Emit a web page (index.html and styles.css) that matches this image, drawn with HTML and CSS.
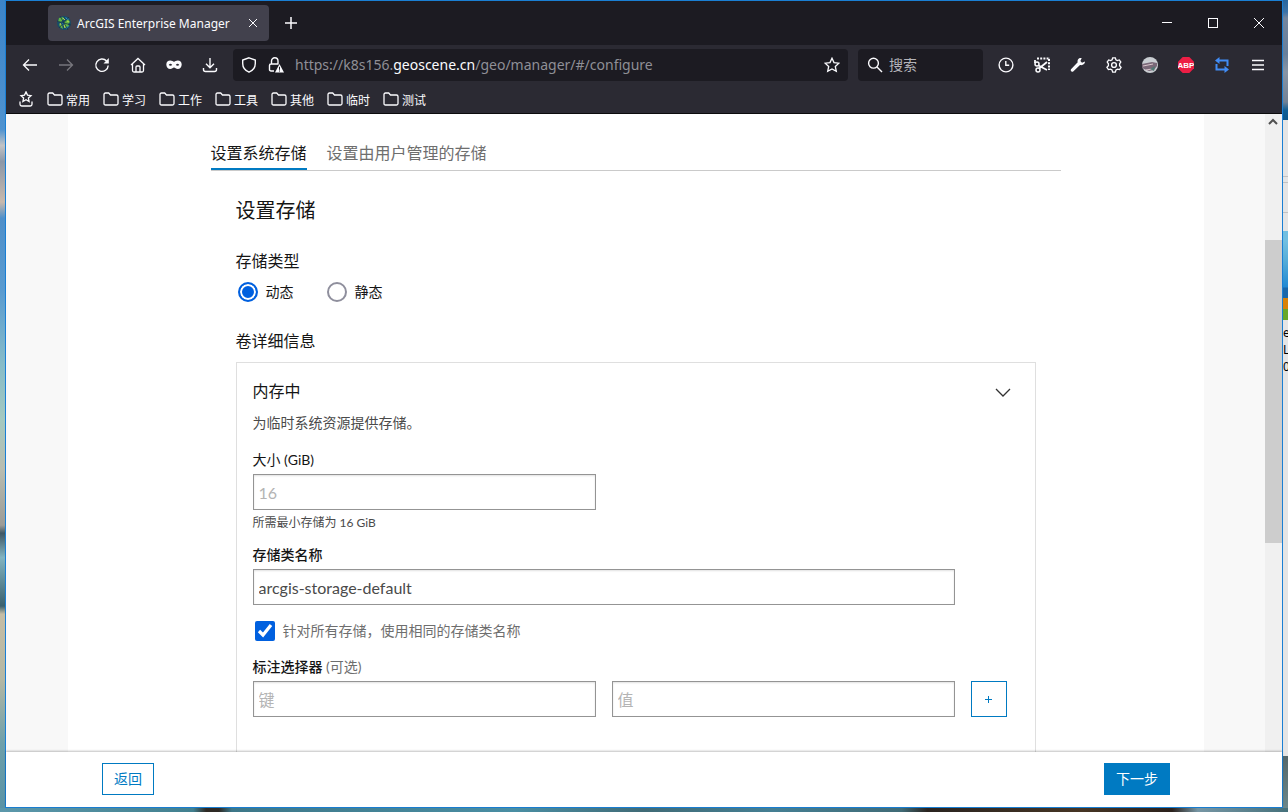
FILE: index.html
```html
<!DOCTYPE html>
<html lang="zh-CN">
<head>
<meta charset="utf-8">
<title>ArcGIS Enterprise Manager</title>
<link rel="stylesheet" href="styles.css">
</head>
<body>
<div class="desktop">
  <div class="edge-left"></div>
  <div class="window">
    <header class="titlebar">
      <div class="browser-tab">
        <svg class="favicon" viewBox="0 0 16 16" aria-hidden="true"><circle cx="8" cy="8" r="7" fill="#174c68"/><path d="M3 3l4-1 1 2-3 3-3 0zM8 7l4-3 2 3-2 2 1 2-4 2-1-3zM3 9l3 1 1 4-3-2z" fill="#62b544"/><path d="M9 2l4 2-2 1zM5 7l3 1-1 2zM10 12l3-1-3 3z" fill="#2b95c9"/><path d="M4 1l8 14M1 6l14 4M13 2L3 13" stroke="#17354a" stroke-width=".8" fill="none"/><path d="M7 3l2 2M11 6l2 1M4 8l1 2M8 10l1 3" stroke="#b9d556" stroke-width="1"/></svg>
        <span class="tab-name">ArcGIS Enterprise Manager</span>
        <button class="tab-close" aria-label="关闭标签页"><svg viewBox="0 0 16 16"><path d="M4 4l8 8M12 4l-8 8"/></svg></button>
      </div>
      <button class="new-tab" aria-label="新建标签页"><svg viewBox="0 0 16 16"><path d="M8 2v12M2 8h12" stroke-width="1.5"/></svg></button>
      <div class="window-controls">
        <button aria-label="最小化"><svg viewBox="0 0 16 16"><path d="M3 7.500h10" shape-rendering="crispEdges"/></svg></button>
        <button aria-label="最大化"><svg viewBox="0 0 16 16"><path d="M3.500 3.500h9v9h-9z" shape-rendering="crispEdges"/></svg></button>
        <button aria-label="关闭"><svg viewBox="0 0 16 16"><path d="M3 3l10 10M13 3L3 13" stroke-width="1"/></svg></button>
      </div>
    </header>

    <div class="toolbar">
      <div class="tools">
        <button aria-label="后退"><svg viewBox="0 0 16 16"><path d="M7 2.500L1.500 8 7 13.500M1.500 8H15" stroke-width="1.300"/></svg></button>
        <button class="dim" aria-label="前进"><svg viewBox="0 0 16 16"><path d="M9 2.500L14.500 8 9 13.500M14.500 8H1" stroke-width="1.300"/></svg></button>
        <button aria-label="重新载入"><svg viewBox="0 0 16 16"><path d="M12.600 4A6.200 6.200 0 1 0 14.200 8.500" stroke-width="1.400"/><path d="M14.800 1v5.500H9.500z" fill="currentColor" stroke="none"/></svg></button>
        <button aria-label="主页"><svg viewBox="0 0 16 16"><path d="M1 8L8 1.500 15 8M2.500 7v6.500q0 1.500 1.500 1.500h8q1.500 0 1.500-1.500V7M6 15V10q0-1 1-1h2q1 0 1 1v5" stroke-width="1.300"/></svg></button>
        <button aria-label="扩展"><svg viewBox="0 0 16 16"><path d="M4.200 3.500C2 3.500.300 5 .300 7.500S2 12 4.200 12C6 12 7 10.500 8 10.500S10 12 11.800 12c2.200 0 3.900-2 3.900-4.500s-1.700-4-3.900-4C10 3.500 9 4.700 8 4.700s-2-1.200-3.800-1.200zM2.700 8Q4.500 5.500 6.200 8 4.500 9.500 2.700 8zM9.800 8Q11.500 5.500 13.300 8 11.500 9.500 9.800 8z" fill="currentColor" fill-rule="evenodd" stroke="none"/></svg></button>
        <button aria-label="下载"><svg viewBox="0 0 16 16"><path d="M8 1v9.500M4 6.800L8 10.800 12 6.800M1.500 11v1.500q0 2 2 2h9q2 0 2-2V11" stroke-width="1.400"/></svg></button>
      </div>
      <div class="url-bar">
        <svg viewBox="0 0 16 16" aria-hidden="true"><path d="M8 .800L14.300 3.100v3.400C14.300 10.500 12 13.500 8 15.200 4 13.500 1.700 10.500 1.700 6.500V3.100z" stroke-width="1.400"/></svg>
        <svg viewBox="0 0 16 16" aria-hidden="true"><path d="M3.500 7V4a3 3 0 0 1 6.500 0v3M6 14H3q-1.500 0-1.500-1.500v-4Q1.500 7 3 7h7.500" stroke-width="1.400"/><path d="M11.500 7L16 15.500H7z" fill="currentColor" stroke="none"/><path d="M11.500 9.800v3M11.500 13.500v1" stroke="#1c1b22" stroke-width="1"/></svg>
        <span class="url">https://k8s156.<b>geoscene.cn</b>/geo/manager/#/configure</span>
        <svg viewBox="0 0 16 16" aria-hidden="true"><path d="M8 1.200l2 4.400 4.900.600-3.600 3.300 1 4.800L8 11.900l-4.300 2.400 1-4.800L1.100 6.200 6 5.600z" stroke-width="1.300"/></svg>
      </div>
      <label class="search-box">
        <svg viewBox="0 0 16 16" aria-hidden="true"><circle cx="6.500" cy="6.200" r="4.900" stroke-width="1.400"/><path d="M10 10l5 5" stroke-width="1.400"/></svg>
        <input type="search" placeholder="搜索" aria-label="搜索">
      </label>
      <div class="tools">
        <button aria-label="历史"><svg viewBox="0 0 16 16"><circle cx="8" cy="8" r="6.900" stroke-width="1.400"/><path d="M7.800 4v4.300h3.400" stroke-width="1.400"/></svg></button>
        <button aria-label="截图"><svg viewBox="0 0 16 16"><path d="M3 1.500h13" stroke-width="2" stroke-dasharray="2 1.200"/><path d="M15 2v11" stroke-width="2" stroke-dasharray="2 1.200"/><path d="M1 3v3" stroke-width="1.800"/><circle cx="3" cy="7" r="2" stroke-width="1.500"/><circle cx="4" cy="13" r="2" stroke-width="1.500"/><path d="M4.500 8.500L13 13M5 11.500L13 5" stroke-width="1.800"/></svg></button>
        <button aria-label="开发者工具"><svg viewBox="0 0 16 16"><path d="M15 4.500l-3 1.200-1.600-1.600L11.700 1C9 .400 7 2.500 7.700 5.200L1 12.200c-1 1.300.800 3.400 2.200 2.200L10 8c3 .600 5-1 5-3.500z" fill="currentColor" stroke="none"/></svg></button>
        <button aria-label="设置"><svg viewBox="0 0 16 16"><path d="M6.700.800h2.600l.600 2 1.400.700 2-.600 1.500 2.200-1.200 1.700v1.900l1.500 1.600-1.500 2.300-2.100-.400-1.500.800-.700 2.200H6.700L6 13l-1.500-.800-2.100.400L.900 10.300l1.500-1.600V6.800L1.200 5.100l1.500-2.200 2 .600 1.400-.700z" stroke-width="1.300"/><circle cx="8" cy="8" r="2.400" stroke-width="1.400"/></svg></button>
        <button aria-label="账户"><svg viewBox="0 0 16 16"><circle cx="8" cy="8" r="8" fill="#c9cdd2" stroke="none"/><path d="M0 7l10-2 5 1v3l-3 4-5 1-7-3z" fill="#7a6878" stroke="none"/><path d="M1 9l10-2M4 13l6-1" stroke="#dbc5cc"/><path d="M8 12l5-3-1 5z" fill="#517874" stroke="none"/></svg></button>
        <button aria-label="广告拦截"><svg viewBox="0 0 16 16"><path d="M4.700 0h6.600L16 4.700v6.600L11.300 16H4.700L0 11.300V4.700z" fill="#ed1e45" stroke="none"/><text x="8" y="11" class="abp-text">ABP</text></svg></button>
        <button class="blue" aria-label="切换代理"><svg viewBox="0 0 16 16"><path d="M5 3.500h8.500V9M11 12.500H2.500V7" stroke-width="2"/><path d="M5.500 0v7L1 3.500zM10.500 9v7l4.500-3.500z" fill="currentColor" stroke="none"/></svg></button>
        <button aria-label="菜单"><svg viewBox="0 0 16 16"><path d="M2 3.500h12M2 8h12M2 12.500h12" stroke-width="1.300"/></svg></button>
      </div>
    </div>

    <nav class="bookmarks" aria-label="书签">
      <button aria-label="书签菜单"><svg viewBox="0 0 16 16"><path d="M8 .900l1.500 3.200 3.500.500-2.600 2.300.7 3.600L8 8.800l-3.100 1.700.7-3.600L3 4.600l3.500-.500zM2 10.500v2.800q0 1.700 1.700 1.700h8.600q1.700 0 1.700-1.700v-2.800" stroke-width="1.300"/></svg></button>
      <button><svg viewBox="0 0 16 16"><path d="M1 3.500q0-1.500 1.500-1.500h3.200l1.800 2h6q1.500 0 1.500 1.500v7q0 1.500-1.500 1.500h-11Q1 14 1 12.500z" stroke-width="1.300"/></svg>常用</button>
      <button><svg viewBox="0 0 16 16"><path d="M1 3.500q0-1.500 1.500-1.500h3.200l1.800 2h6q1.500 0 1.500 1.500v7q0 1.500-1.500 1.500h-11Q1 14 1 12.500z" stroke-width="1.300"/></svg>学习</button>
      <button><svg viewBox="0 0 16 16"><path d="M1 3.500q0-1.500 1.500-1.500h3.200l1.800 2h6q1.500 0 1.500 1.500v7q0 1.500-1.500 1.500h-11Q1 14 1 12.500z" stroke-width="1.300"/></svg>工作</button>
      <button><svg viewBox="0 0 16 16"><path d="M1 3.500q0-1.500 1.500-1.500h3.200l1.800 2h6q1.500 0 1.500 1.500v7q0 1.500-1.500 1.500h-11Q1 14 1 12.500z" stroke-width="1.300"/></svg>工具</button>
      <button><svg viewBox="0 0 16 16"><path d="M1 3.500q0-1.500 1.500-1.500h3.200l1.800 2h6q1.500 0 1.500 1.500v7q0 1.500-1.500 1.500h-11Q1 14 1 12.500z" stroke-width="1.300"/></svg>其他</button>
      <button><svg viewBox="0 0 16 16"><path d="M1 3.500q0-1.500 1.500-1.500h3.200l1.800 2h6q1.500 0 1.500 1.500v7q0 1.500-1.500 1.500h-11Q1 14 1 12.500z" stroke-width="1.300"/></svg>临时</button>
      <button><svg viewBox="0 0 16 16"><path d="M1 3.500q0-1.500 1.500-1.500h3.200l1.800 2h6q1.500 0 1.500 1.500v7q0 1.500-1.500 1.500h-11Q1 14 1 12.500z" stroke-width="1.300"/></svg>测试</button>
    </nav>

    <div class="viewport">
      <div class="page">
        <main class="sheet">
          <div class="content">
            <div class="tabs" role="tablist">
              <button class="tab active" role="tab" aria-selected="true">设置系统存储</button>
              <button class="tab" role="tab" aria-selected="false">设置由用户管理的存储</button>
            </div>
            <section class="storage">
              <h1>设置存储</h1>
              <fieldset>
                <legend>存储类型</legend>
                <div class="radios">
                  <label><input type="radio" name="type" checked>动态</label>
                  <label><input type="radio" name="type">静态</label>
                </div>
              </fieldset>
              <h2>卷详细信息</h2>
              <div class="card">
                <div class="card-head">
                  <h3>内存中</h3>
                  <button class="collapse" aria-label="折叠"><svg viewBox="0 0 16 16"><path d="M1 6l7 7 7-7" stroke-width="1.300"/></svg></button>
                </div>
                <p class="description">为临时系统资源提供存储。</p>
                <div class="columns">
                  <div>
                    <label class="label" for="size">大小 (GiB)</label>
                    <input class="field" id="size" type="text" placeholder="16">
                    <p class="hint">所需最小存储为 16 GiB</p>
                  </div>
                </div>
                <div class="columns">
                  <div class="wide">
                    <label class="label strong" for="class-name">存储类名称</label>
                    <input class="field" id="class-name" type="text" value="arcgis-storage-default">
                  </div>
                </div>
                <label class="check"><input type="checkbox" checked>针对所有存储，使用相同的存储类名称</label>
                <label class="label strong" for="key">标注选择器 <span class="optional">(可选)</span></label>
                <div class="columns">
                  <input class="field" id="key" type="text" placeholder="键">
                  <input class="field" type="text" placeholder="值" aria-label="值">
                  <button class="add" aria-label="添加"><svg viewBox="0 0 16 16"><path d="M4 8.500h7M7.500 5v7" shape-rendering="crispEdges"/></svg></button>
                </div>
              </div>
            </section>
          </div>
        </main>
      </div>
      <div class="scrollbar"><svg viewBox="0 0 16 16" aria-hidden="true"><path d="M4 10l4-4 4 4" stroke-width="2"/></svg><div class="thumb"></div></div>
    </div>
    <footer class="actions">
      <button class="btn">返回</button>
      <button class="btn primary">下一步</button>
    </footer>
  </div>
  <div class="edge-right">
    <div class="sky"></div>
    <div class="behind">
      <div class="rules"></div>
      <div class="logo"></div>
      <div class="caption">ec<br>L<br>0</div>
    </div>
    <div class="sea"></div>
  </div>
  <div class="edge-bottom"></div>
</div>
</body>
</html>
```
FILE: styles.css
```css
* { box-sizing: border-box; }

body {
  margin: 0;
  font-family: Lato, "Noto Sans CJK SC", sans-serif;
  font-size: 14px;
  color: #151515;
}

h1, h2, h3, p, fieldset, legend { margin: 0; padding: 0; border: 0; font-weight: 400; }
button, input { font-family: inherit; }
button { padding: 0; border: 0; background: none; color: inherit; }
svg { width: 16px; height: 16px; flex: none; fill: none; stroke: currentColor; }

.desktop {
  display: grid;
  grid-template: minmax(0, 1fr) 4px / 5px minmax(0, 1fr) 5px;
  height: 100vh;
  overflow: hidden;
}

.edge-left {
  background: linear-gradient(#3c84c8 0%, #4f93d0 16%, #c3c3c4 18%, #8c98a8 20%, #c9b9ac 25%, #4f8fc9 27%, #5a9bd0 36%, #87bcc8 45%, #a5c9c0 52%, #b9bdb0 58%, #9c9b96 65%, #405866 66%, #83b4c0 69%, #3b616e 75%, #c5bda5 76%, #b5b8a4 84%, #6ea0ab 92%, #5a93a5 100%);
}

.edge-bottom {
  grid-column: 1 / -1;
  background: linear-gradient(90deg, #5c98ab 0, #42808f 15%, #2e2a25 16%, #2e2a25 17%, #3d7788 18%, #4a8ea3 40%, #406b76 50%, #457f93 60%, #406b76 70%, #2a2420 72%, #463524 84%, #2b211c 91%, #7796a4 93%, #45717b 100%);
}

.window {
  display: flex;
  flex-direction: column;
  min-width: 0;
  border: 1px solid #1a7fd4;
  background: #fff;
}

.titlebar {
  display: flex;
  align-items: center;
  height: 44px;
  padding-left: 42px;
  background: #1c1b22;
  color: #fbfbfe;
}

.browser-tab {
  display: flex;
  align-items: center;
  width: 221px;
  height: 36px;
  padding: 0 8px;
  border-radius: 4px;
  background: #42414d;
}

.favicon { stroke: none; }

.tab-name {
  flex: 1;
  margin-left: 5px;
  font: 12px "Noto Sans", sans-serif;
  white-space: nowrap;
}

.tab-close, .new-tab { display: flex; }
.tab-close svg { stroke-width: 1; }
.new-tab { margin-left: 14px; }
.window-controls { display: flex; align-self: stretch; margin-left: auto; }
.window-controls button { display: grid; place-items: center; width: 46px; }

.toolbar {
  display: flex;
  align-items: center;
  height: 40px;
  padding: 0 6px;
  background: #2b2a33;
  color: #fbfbfe;
}

.tools { display: flex; }
.tools button { display: grid; place-items: center; width: 36px; height: 32px; }
.tools .dim { color: #77767d; }
.tools .blue { color: #418cf5; }
.abp-text { fill: #fff; stroke: none; font: bold 8px "Liberation Sans", sans-serif; text-anchor: middle; }

.url-bar, .search-box {
  display: flex;
  align-items: center;
  height: 32px;
  border-radius: 4px;
  background: #1c1b22;
}

.url-bar { flex: 1; min-width: 0; gap: 11px; margin: 0 10px 0 5px; padding: 0 8px; }
.url { flex: 1; overflow: hidden; padding-bottom: 1px; font: 14px "Noto Sans", sans-serif; color: #8f8f96; white-space: nowrap; }
.url b { font-weight: 400; color: #fbfbfe; }
.search-box { width: 125px; gap: 6px; margin-right: 5px; padding: 0 9px; }
.search-box input { min-width: 0; width: 80px; padding: 0 0 1px; border: 0; background: none; font-size: 14px; color: #fff; }
.search-box input::placeholder { color: #b4b4ba; opacity: 1; }

.bookmarks {
  display: flex;
  gap: 13px;
  height: 29px;
  padding: 0 12px;
  border-bottom: 1px solid #0c0c0d;
  background: #2b2a33;
  color: #fbfbfe;
}

.bookmarks button { display: flex; align-items: center; gap: 3px; font-size: 12px; }

.viewport { display: flex; flex: 1; min-height: 0; overflow: hidden; }
.page { flex: 1; min-width: 0; padding: 0 16px; background: #f8f8f8; }
.sheet { max-width: 1136px; min-height: 100%; margin: 0 auto; padding: 24px 16px 0; background: #fff; }
.content { max-width: 850px; margin: 0 auto; }

.tabs { display: flex; gap: 20px; border-bottom: 1px solid #cacaca; }
.tab { border-bottom: 2px solid transparent; font-size: 16px; line-height: 30px; color: #6e6e6e; }
.tab.active { border-color: #007ac2; color: #151515; }

.storage { padding: 23px 25px 0; }
h1 { font-size: 20px; line-height: 32px; }
fieldset { margin-top: 23px; }
legend, h2, h3 { font-size: 16px; line-height: 24px; }
.radios { display: flex; gap: 33px; padding: 9px 2px 0; }
.radios label, .check { display: flex; align-items: center; gap: 8px; line-height: 20px; }

input[type="radio"], input[type="checkbox"] { width: 20px; height: 20px; margin: 0; }

input[type="radio"] {
  appearance: none;
  border: 2px solid #8f8f9d;
  border-radius: 50%;
}

input[type="radio"]:checked {
  border-color: #0060df;
  background: #0060df;
  box-shadow: inset 0 0 0 2px #fff;
}

input[type="checkbox"] { accent-color: #0060df; }

h2 { margin-top: 27px; }

.card {
  margin-top: 9px;
  padding: 16px 28px 64px 16px;
  border: 1px solid #dfdfdf;
}

.card-head { display: flex; justify-content: space-between; }
.collapse { display: grid; place-items: center; width: 24px; margin-right: -8px; color: #323232; }
.description { margin-top: 10px; line-height: 20px; color: #4a4a4a; }
.description + .columns { margin-top: 17px; }
.columns { display: grid; grid-template-columns: 1fr 1fr 36px; gap: 16px; }
.columns + .columns { margin-top: 12px; }
.wide { grid-column: span 2; }
.label { display: block; line-height: 20px; }
.strong { font-weight: 500; }
.optional { font-weight: 400; color: #6e6e6e; }

.field {
  display: block;
  width: 100%;
  height: 36px;
  margin-top: 4px;
  padding: 0 5px;
  border: 1px solid #949494;
  border-radius: 0;
  background: #fff;
  box-shadow: inset 0 1px 2px rgba(0, 0, 0, .12);
  font-size: 16px;
  color: #4a4a4a;
}

.field::placeholder { color: #b4b4b4; opacity: 1; }
.hint { margin-top: 3px; font-size: 12px; line-height: 20px; color: #4a4a4a; }
.check { margin: 16px 0; padding-left: 2px; color: #6e6e6e; }

.add {
  display: grid;
  place-items: center;
  height: 36px;
  margin-top: 4px;
  border: 1px solid #007ac2;
  color: #007ac2;
}

.scrollbar { width: 17px; background: #f0f0f0; color: #505050; }
.scrollbar svg { display: block; }
.thumb { height: 303px; margin-top: 110px; background: #cdcdcd; }

.actions {
  z-index: 1;
  display: flex;
  flex: none;
  justify-content: space-between;
  padding: 11px 112px 12px 96px;
  background: #fff;
  box-shadow: 0 -1px 2px rgba(0, 0, 0, .25);
}

.btn { height: 32px; padding: 0 11px 2px; border: 1px solid #007ac2; font-size: 14px; color: #007ac2; }
.btn.primary { background: #007ac2; color: #fff; }

.edge-right { display: flex; flex-direction: column; min-height: 0; overflow: hidden; }
.sky { height: 120px; background: linear-gradient(#28659c, #3c73a8 10%, #73869f 15%, #667f9b 45%, #8795a6 60%, #718195 85%, #0d5d95 92%, #0b568b); }
.behind { flex: 1; min-height: 0; background: #e5e5e5; }
.rules { height: 111px; background: linear-gradient(transparent 56px, #c2c2c2 56px 57px, transparent 57px 62px, #c2c2c2 62px 63px, transparent 63px 92px, #c2c2c2 92px 93px, transparent 93px); }
.logo { height: 89px; background: linear-gradient(#72bfe1 0 10px, #55acd8 30px, #2289d2 56px, #1b67a9 57px 67px, #d98208 67px 78px, #68a728 78px); }
.caption { padding-top: 4px; font: 12px/17px "Noto Sans", sans-serif; color: #000; }
.sea { height: 52px; background: linear-gradient(#55676a, #6b8789); }
```
